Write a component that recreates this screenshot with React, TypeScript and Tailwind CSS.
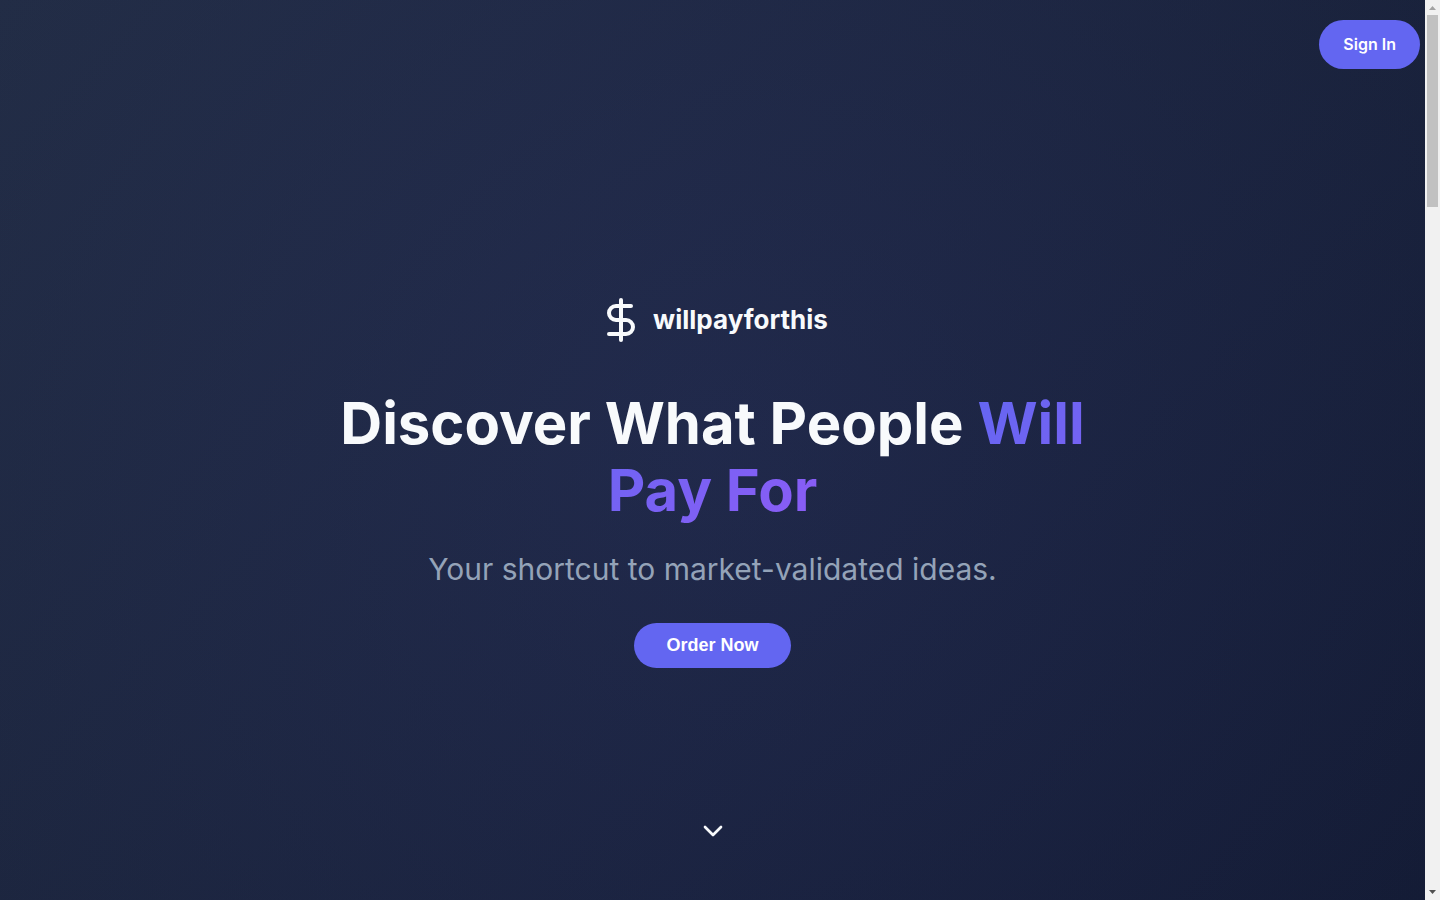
import React from 'react';
import { ChevronDown, DollarSign } from 'lucide-react';

const Scrollbar: React.FC = () => (
  <div aria-hidden="true" className="flex w-[15px] shrink-0 flex-col items-center justify-between bg-[#f1f1f1]">
    <div className="flex w-full flex-col items-center">
      <svg width="15" height="15" viewBox="0 0 15 15" fill="#a3a3a3">
        <path d="M4 10h7L7.5 6z" />
      </svg>
      <div className="h-48 w-[11px] bg-[#c1c1c1]" />
    </div>
    <svg width="15" height="15" viewBox="0 0 15 15" fill="#505050">
      <path d="M4 5h7L7.5 9z" />
    </svg>
  </div>
);

const Hero: React.FC = () => {
  return (
    <main className="relative flex flex-1 flex-col items-center justify-center bg-[radial-gradient(circle_at_50%_50%,rgba(99,102,241,0.13),rgba(99,102,241,0.06)_100%),linear-gradient(135deg,#1e293b_0%,#0f172a_100%)] px-8 pt-16">
      <a
        href="#signin"
        className="absolute top-5 right-[5px] rounded-full bg-[#6366f1] px-6 py-3 text-base leading-[25px] font-semibold text-white"
      >
        Sign In
      </a>

      <div className="mb-[46px] flex items-center gap-2">
        <DollarSign size={48} />
        <span className="text-[26px] leading-8 font-bold">willpayforthis</span>
      </div>

      <h1 className="mb-6 max-w-[800px] text-center text-[58px] leading-[67px] font-bold">
        Discover What People{' '}
        <span className="bg-linear-135 from-[#6366f1] to-[#8b5cf6] bg-clip-text text-transparent">Will Pay For</span>
      </h1>

      <p className="mb-8 text-center text-[30px] leading-[43px] text-[#94a3b8]">
        Your shortcut to market-validated ideas.
      </p>

      <button
        type="button"
        className="rounded-full bg-[#6366f1] px-8 py-3 font-['Liberation_Sans',sans-serif] text-lg leading-[21px] font-semibold text-white"
      >
        Order Now
      </button>

      <a href="#features" aria-label="Scroll down" className="absolute bottom-[53px]">
        <ChevronDown size={32} />
      </a>
    </main>
  );
};

export default function App() {
  return (
    <div className="flex min-h-screen bg-[#0f172a] font-['Inter',sans-serif] text-[#f8fafc]">
      <Hero />
      <Scrollbar />
    </div>
  );
}
